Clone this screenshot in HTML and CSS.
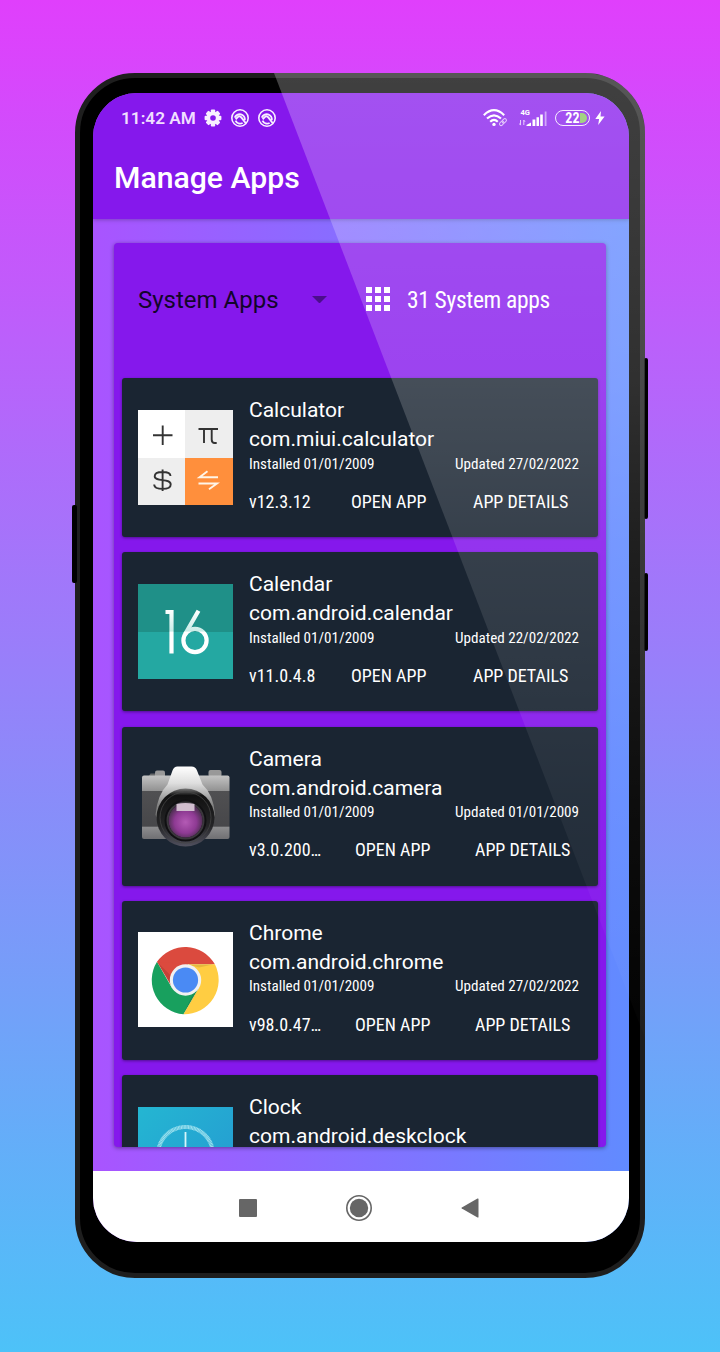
FILE: index.html
```html
<!DOCTYPE html>
<html lang="en">
<head>
<meta charset="utf-8">
<title>Manage Apps</title>
<link rel="stylesheet" href="styles.css">
</head>
<body>
<main class="stage">
<div class="phone">
  <i class="key key-left"></i><i class="key key-volume"></i><i class="key key-power"></i>
  <div class="screen">
    <header class="app-bar">
      <div class="status">
        <span class="time">11:42 AM</span>
        <svg class="gear" viewBox="-9 -9 18 18" width="18" height="18"><g fill="#f8efff"><g><rect x="-2.2" y="-8.4" width="4.4" height="16.8" rx="1"/><rect x="-2.2" y="-8.4" width="4.4" height="16.8" rx="1" transform="rotate(45)"/><rect x="-2.2" y="-8.4" width="4.4" height="16.8" rx="1" transform="rotate(90)"/><rect x="-2.2" y="-8.4" width="4.4" height="16.8" rx="1" transform="rotate(135)"/></g><circle r="6.5"/></g><circle r="2.8" fill="#8518ec"/></svg>
        <svg class="ring" viewBox="-10 -10 20 20" width="20" height="20" fill="none" stroke="#f8efff"><circle r="8.2" stroke-width="1.6"/><path d="M2.6 5A5.400 5.400 0 0 1-4.500 2.600M-5.200-.4A5.200 5.200 0 0 1 4.800 2.200" stroke-width="1.900"/><path d="M-4.400 1.200L-1.400-1.600Q0-2.400 1.300-.6L6 5.500" stroke-width="1.900"/></svg>
        <svg class="ring" viewBox="-10 -10 20 20" width="20" height="20" fill="none" stroke="#f8efff"><circle r="8.2" stroke-width="1.6"/><path d="M2.6 5A5.400 5.400 0 0 1-4.500 2.600M-5.200-.4A5.200 5.200 0 0 1 4.800 2.200" stroke-width="1.900"/><path d="M-4.400 1.200L-1.400-1.600Q0-2.400 1.300-.6L6 5.500" stroke-width="1.900"/></svg>
        <span class="grow"></span>
        <svg class="wifi" viewBox="0 0 25 18" width="25" height="18" fill="none" stroke="#fff" stroke-width="2.1"><path d="M.8 6.2Q11 -3.8 21.2 6.2M4 9.6Q11 3 18 9.6M7.2 12.8Q11 9 14.8 12.8"/><circle cx="11" cy="15.4" r="1.7" fill="#fff" stroke="none"/><g transform="rotate(-45 20 13)" stroke="#dcb8fa" stroke-width="1"><rect x="15.7" y="11.4" width="5" height="3.2" rx="1.6"/><rect x="19.2" y="11.4" width="5" height="3.2" rx="1.6"/></g></svg>
        <svg class="signal" viewBox="0 0 29 19" width="29" height="19"><text x="1.5" y="5.9" class="net">4G</text><path d="M1.5 11v5M.3 14.5l1.2 1.7M4.8 16v-5M6 12.8l-1.2-1.7" stroke="#e0bcff" fill="none"/><g fill="#fff"><path d="M7.500 17v-1l4.500-2.500V17z"/><path d="M13.5 10.5h2.8V17h-2.8zM17.5 8.2h2.5V17h-2.5zM21.2 5.5h2.6V17h-2.6z"/></g><path d="M25.7 2.5h1.8V17h-1.8z" fill="#c48cf7"/></svg>
        <span class="battery"><b>22</b><i></i></span>
        <svg class="bolt" viewBox="0 0 10 14" width="10" height="14"><path d="M6 0L.3 8h3.8L3.2 14L9.6 5.4H5.5z" fill="#fff"/></svg>
      </div>
      <h1>Manage Apps</h1>
    </header>
    <div class="content">
      <section class="panel">
        <div class="filter">
          <span class="select">System Apps</span><i class="caret"></i>
          <svg class="grid" viewBox="0 0 24 24" width="24" height="24" fill="#fff"><path d="M0 0h6v6H0zM9 0h6v6H9zM18 0h6v6h-6zM0 9h6v6H0zM9 9h6v6H9zM18 9h6v6h-6zM0 18h6v6H0zM9 18h6v6H9zM18 18h6v6h-6z"/></svg>
          <span class="count cond">31 System apps</span>
        </div>
        <div class="list">
          <article class="card">
            <svg class="icon" viewBox="0 0 95 95"><path fill="#fff" d="M0 0h47v48H0z"/><path fill="#eee" d="M47 0h48v48H47zM0 48h47v47H0z"/><path fill="#ff8f3c" d="M47 48h48v47H47z"/><g fill="none" stroke="#333" stroke-width="1.9"><path d="M15 25.200h19.500M24.700 15.500v19.500"/><path d="M60.500 19H80M66 19v14M73.700 19v10.500q0 3.500 3 3.500h2"/><path d="M32.500 66c0-3-3.500-4-8-4s-7.800 1.200-7.800 4.200c0 6 16 1.800 16 8.200 0 3.500-3.700 4.500-8.200 4.500s-8.300-1.200-8.300-4.500M24.600 59.500v21.500"/></g><path d="M80 67.300H61.500l8-6M60.500 73.500H79l-8 5.700" fill="none" stroke="#fff5e8" stroke-width="1.900"/></svg>
            <div class="info"><h2>Calculator</h2><p class="pkg">com.miui.calculator</p>
              <div class="dates cond"><span>Installed 01/01/2009</span><span>Updated 27/02/2022</span></div>
              <div class="actions cond"><span class="version">v12.3.12</span><span class="open">OPEN APP</span><span>APP DETAILS</span></div></div>
          </article>
          <article class="card">
            <svg class="icon" viewBox="0 0 95 95"><defs><linearGradient id="six" x1="0" y1="26" x2="0" y2="60" gradientUnits="userSpaceOnUse"><stop offset="0" stop-color="#fff"/><stop offset=".62" stop-color="#c9ece7"/><stop offset=".65" stop-color="#fff"/></linearGradient></defs><path fill="#1f9088" d="M0 0h95v48H0z"/><path fill="#24a8a2" d="M0 48h95v47H0z"/><g fill="none" stroke="url(#six)" stroke-width="4.200"><path d="M27.500 28h6v41.500M60.500 26.800L47.200 50"/><circle cx="57" cy="56.500" r="11.600"/></g></svg>
            <div class="info"><h2>Calendar</h2><p class="pkg">com.android.calendar</p>
              <div class="dates cond"><span>Installed 01/01/2009</span><span>Updated 22/02/2022</span></div>
              <div class="actions cond"><span class="version">v11.0.4.8</span><span class="open">OPEN APP</span><span>APP DETAILS</span></div></div>
          </article>
          <article class="card">
            <svg class="icon" viewBox="0 0 95 95"><defs>
              <linearGradient id="body" x1="0" y1="0" x2="0" y2="1"><stop offset="0" stop-color="#c4c4c4"/><stop offset=".24" stop-color="#929292"/><stop offset=".25" stop-color="#505052"/><stop offset=".8" stop-color="#47474a"/><stop offset=".81" stop-color="#8d8d8f"/><stop offset="1" stop-color="#707073"/></linearGradient>
              <linearGradient id="prism" x1="0" y1="0" x2="0" y2="1"><stop offset="0" stop-color="#fff"/><stop offset=".22" stop-color="#dedede"/><stop offset=".5" stop-color="#858585"/><stop offset="1" stop-color="#555"/></linearGradient>
              <linearGradient id="rim" x1="0" y1="0" x2="0" y2="1"><stop offset="0" stop-color="#777"/><stop offset=".12" stop-color="#111"/><stop offset=".65" stop-color="#252527"/><stop offset="1" stop-color="#50505e"/></linearGradient>
              <radialGradient id="glass" cx=".5" cy=".55"><stop offset="0" stop-color="#b45ab5"/><stop offset=".65" stop-color="#8e3a93"/><stop offset="1" stop-color="#543058"/></radialGradient></defs>
              <g transform="translate(.5 6.500)"><path d="M10 12l2-3h7v5h-9z" fill="#66686a"/><rect x="16.500" y="6" width="10" height="7" rx="2" fill="#999"/><rect x="70" y="5.500" width="13" height="7" rx="2" fill="#999"/>
              <rect x="3.500" y="11" width="87.500" height="63.500" rx="2" fill="url(#body)"/>
              <path d="M39 2h14q4 0 5.500 4L64 20q11 10 12.500 30Q68 78 46 78T17 50Q19 30 29 20L34 6q1.500-4 5-4z" fill="url(#prism)"/>
              <circle cx="47" cy="53" r="29" fill="url(#rim)"/><circle cx="47" cy="53" r="25.500" fill="none" stroke="#444" stroke-width=".8"/><circle cx="47" cy="56" r="21" fill="#101012"/><circle cx="47" cy="56" r="18" fill="none" stroke="#3a373c" stroke-width="2"/><circle cx="47" cy="56" r="17" fill="url(#glass)"/><path d="M38 39.500q9-2 18 0v7H38z" fill="#d0bdce"/></g></svg>
            <div class="info"><h2>Camera</h2><p class="pkg">com.android.camera</p>
              <div class="dates cond"><span>Installed 01/01/2009</span><span>Updated 01/01/2009</span></div>
              <div class="actions long cond"><span class="version">v3.0.200…</span><span class="open">OPEN APP</span><span>APP DETAILS</span></div></div>
          </article>
          <article class="card">
            <svg class="icon" viewBox="0 0 95 95"><path fill="#fff" d="M0 0h95v95H0z"/>
              <path fill="#db4a3e" d="M47.500 48L19 29.800A34.300 34.300 0 0 1 76.900 32.300H47.500z"/><path fill="#18a05e" d="M19 29.800A34.300 34.300 0 0 0 45.500 82.200L60.800 56L34 56z"/><path fill="#ffcd42" d="M47.500 32.300H76.900A34.300 34.300 0 0 1 45.500 82.200L60.800 56z"/><path fill="#db4a3e" d="M19 29.800L34.500 56 50 48V32.300z"/><path fill="#000" opacity=".1" d="M19 29.800l13.500 22 1.500-7zM49 32.300h27L61 35.500zM45.500 82.200l14-23-5 3z"/><circle cx="47.500" cy="48" r="15.700" fill="#f1f1f1"/><circle cx="47.500" cy="48" r="12.600" fill="#4a8af4"/></svg>
            <div class="info"><h2>Chrome</h2><p class="pkg">com.android.chrome</p>
              <div class="dates cond"><span>Installed 01/01/2009</span><span>Updated 27/02/2022</span></div>
              <div class="actions long cond"><span class="version">v98.0.47…</span><span class="open">OPEN APP</span><span>APP DETAILS</span></div></div>
          </article>
          <article class="card last">
            <svg class="icon" viewBox="0 0 95 95"><defs><linearGradient id="sky" x1="0" y1="0" x2="1" y2="1"><stop offset="0" stop-color="#24b6d2"/><stop offset="1" stop-color="#2598d2"/></linearGradient></defs><path fill="url(#sky)" d="M0 0h95v95H0z"/><circle cx="47.500" cy="47.500" r="27.500" fill="none" stroke="#9be0ee" stroke-width="4" stroke-dasharray="1.100 .35"/><path d="M47.500 25v24" stroke="#d5f5fa" stroke-width="1.800"/></svg>
            <div class="info"><h2>Clock</h2><p class="pkg">com.android.deskclock</p></div>
          </article>
        </div>
      </section>
    </div>
    <nav class="nav">
      <svg viewBox="0 0 18 18" width="18" height="18"><rect width="18" height="18" rx="1" fill="#666"/></svg>
      <svg viewBox="0 0 26 26" width="26" height="26"><circle cx="13" cy="13" r="12.200" fill="none" stroke="#666" stroke-width="1.600"/><circle cx="13" cy="13" r="9.200" fill="#666"/></svg>
      <svg viewBox="0 0 18 20" width="18" height="20"><path d="M17.500 1v18q0 .9-1 .5L.8 10.600q-.8-.6 0-1.200L16.500.5q1-.4 1 .5z" fill="#666"/></svg>
    </nav>
  </div>
  <div class="glare"><i></i></div>
</div>
</main>
</body>
</html>
```
FILE: styles.css
```css
* { box-sizing: border-box; }
body { margin: 0; font-family: Roboto, "Liberation Sans", sans-serif; color: #fff; }
h1, h2, p { margin: 0; font-weight: 400; }
svg { display: block; flex: none; }
.cond { font-family: "Roboto Condensed", Roboto, sans-serif; font-stretch: 75%; }
.grow { flex: 1; }

.stage { height: 1352px; padding: 73px 75px 0; background: linear-gradient(#e03ffc, #4dc2f8); }
.phone { position: relative; width: 570px; height: 1205px; padding: 15px 12px 30px 12.500px; border: 5px solid #1e1e1e; border-radius: 60px; background: #000; }
.key { position: absolute; background: #000; border-radius: 2px; }
.key-left { left: -8px; top: 427px; width: 5px; height: 78px; }
.key-volume { right: -8px; top: 280px; width: 4px; height: 161px; }
.key-power { right: -8px; top: 495px; width: 4px; height: 78px; }
.screen { display: flex; flex-direction: column; height: 1149px; width: 536px; border-radius: 44px; overflow: hidden; background: linear-gradient(90deg, #a954ff, #618bff); }

.app-bar { height: 125.500px; flex: none; background: #8518ec; box-shadow: 0 1px 4px rgba(0,0,0,.25); }
.status { display: flex; align-items: center; height: 50px; padding: 0 24px 0 28.500px; }
.time { width: 74px; font-size: 17.200px; font-weight: 600; color: #f0dfff; white-space: nowrap; }
.gear { margin-left: 9px; }
.ring { margin-left: 8px; }
.ring + .ring { margin-left: 7px; }
.signal { margin-left: 11px; }
.net { font-size: 7.500px; font-weight: 700; fill: #fff; }
.battery { display: flex; align-items: center; justify-content: flex-end; width: 35px; height: 16px; margin-left: 7px; padding: 0 2px; border: 1.500px solid #f3e6ff; border-radius: 8px; }
.battery b { font: 700 14px/14px "Roboto Condensed", Roboto, sans-serif; font-stretch: 75%; }
.battery i { width: 7px; height: 10px; border-radius: 0 5px 5px 0; background: #85c35c; }
.bolt { margin-left: 5px; }
h1 { padding-left: 21.500px; font-size: 30.200px; line-height: 36px; font-weight: 500; margin-top: 17px; white-space: nowrap; }

.content { flex: 1; min-height: 0; padding: 24.500px 22.500px 24px 21.500px; }
.panel { height: 904px; border-radius: 4px; overflow: hidden; background: #8518ec; box-shadow: 0 1px 4px rgba(0,0,0,.4); }
.filter { display: flex; align-items: center; height: 135px; padding: 0 0 22.500px 24px; white-space: nowrap; }
.select { width: 174px; padding-top: 1px; font-size: 24px; color: #12052a; }
.caret { width: 15px; border: 7.500px solid transparent; border-top-color: #4b0e8c; border-bottom: 0; }
.grid { margin-left: 39px; }
.count { margin-left: 17px; padding-top: 1px; font-size: 23.500px; letter-spacing: -.33px; }
.list { display: flex; flex-direction: column; gap: 15.300px; padding: 0 8px 0 7.500px; }
.card { display: flex; flex: none; height: 159px; padding: 17px 19px 0 16.500px; border-radius: 3px; background: #1a2532; box-shadow: 0 1px 3px rgba(0,0,0,.4); }
.last { height: 127px; }
.icon { width: 95px; height: 95px; margin-top: 14.600px; }
.info { flex: 1; min-width: 0; margin-left: 16px; white-space: nowrap; }
h2, .pkg { font-size: 21.030px; line-height: 29px; }
.dates { display: flex; justify-content: space-between; padding-top: .6px; font-size: 15.100px; line-height: 21px; }
.actions { display: flex; margin-top: 16.300px; font-size: 18px; line-height: 22px; }
.version { width: 102px; }
.open { width: 122px; }
.long .version { width: 106px; }
.long .open { width: 120px; }

.nav { display: flex; align-items: center; flex: none; height: 71px; padding: 3px 150px 0 146px; justify-content: space-between; background: #fff; }

.glare { position: absolute; inset: -5px; border-radius: 60px; overflow: hidden; pointer-events: none; }
.glare i { display: block; height: 965px; clip-path: polygon(199px 0, 100% 0, 100% 100%); background: linear-gradient(rgba(255,255,255,.25), rgba(255,255,255,.19) 32%, rgba(255,255,255,.12) 49%, rgba(255,255,255,.05) 76%, rgba(255,255,255,.01)); }
```
